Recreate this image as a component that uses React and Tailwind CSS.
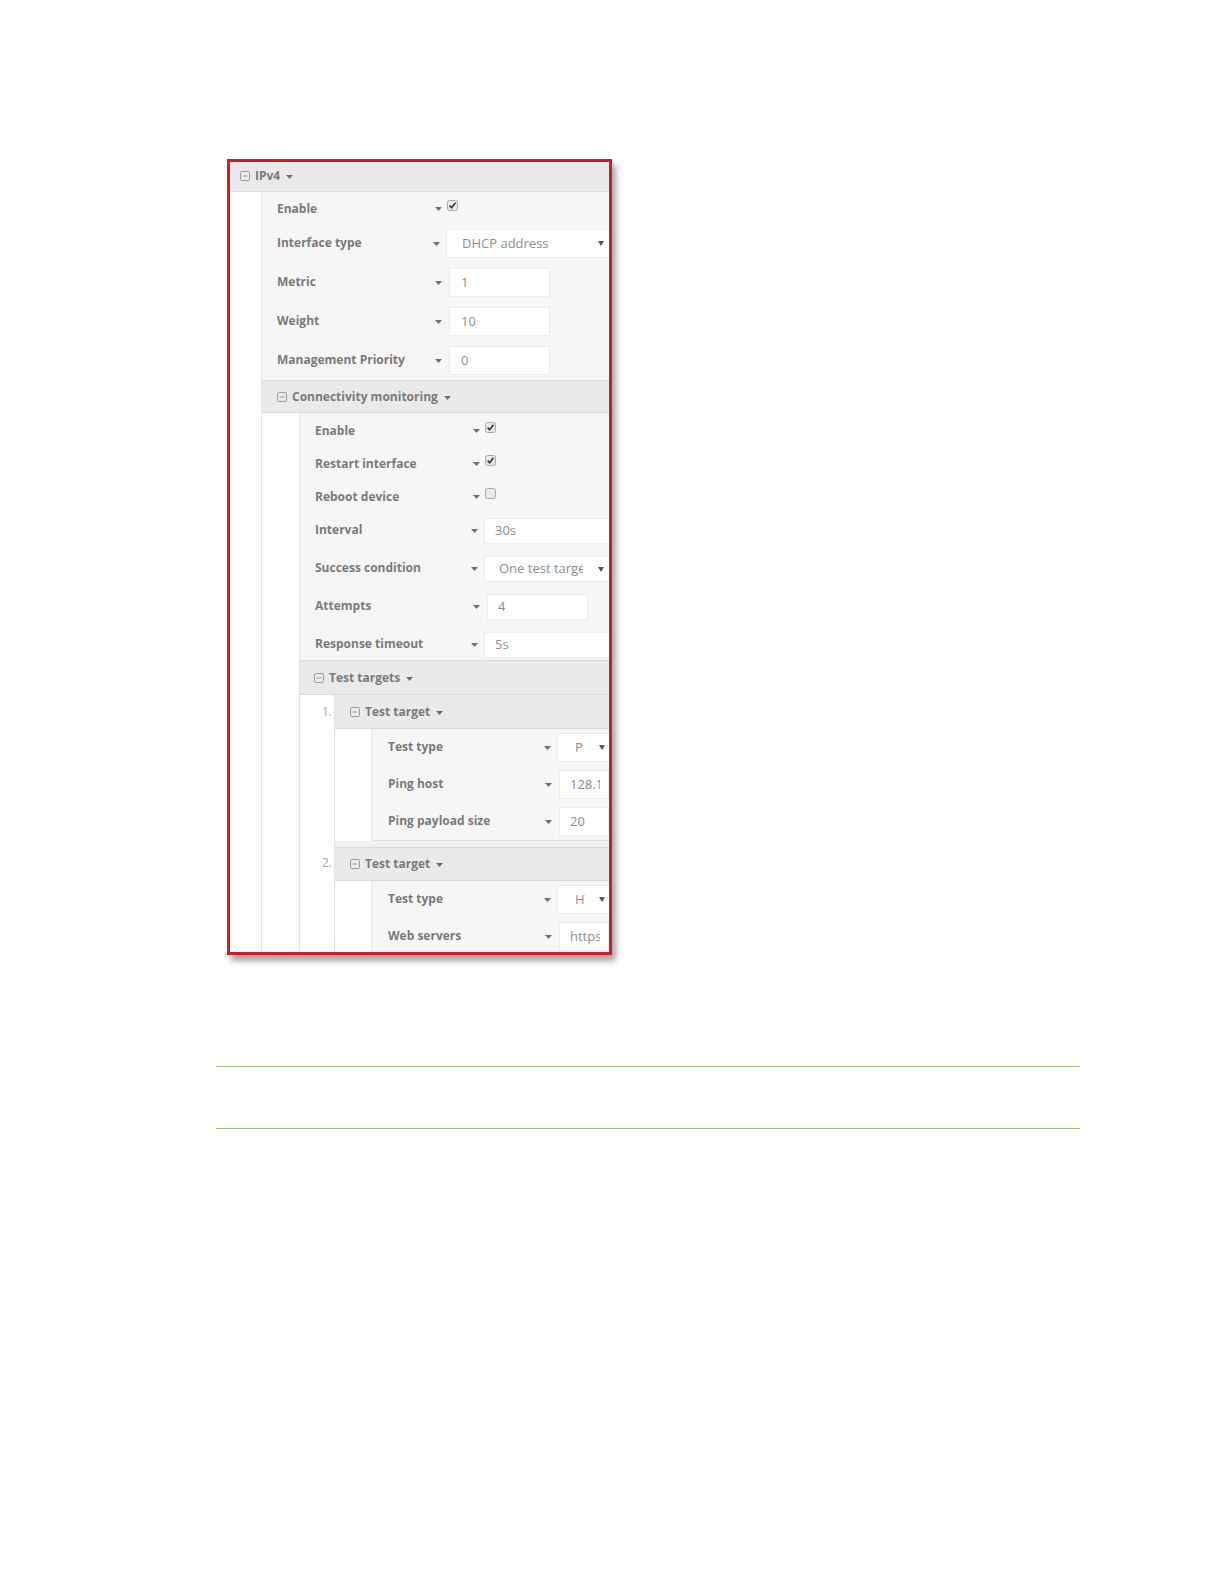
const Caret = ({ className = '' }) => (
  <svg width="7" height="4" viewBox="0 0 7 4" className={className}>
    <path d="M0 0h7L3.5 4z" fill="#707070" />
  </svg>
)

const MinusBox = () => (
  <svg width="10" height="10" viewBox="0 0 10 10" className="shrink-0">
    <rect x="0.5" y="0.5" width="9" height="9" rx="1.5" fill="none" stroke="#9c9c9c" />
    <line x1="2.5" y1="5" x2="7.5" y2="5" stroke="#9c9c9c" />
  </svg>
)

const Check = ({ checked }) => (
  <svg width="11" height="11" viewBox="0 0 11 11" className="shrink-0">
    <rect x="0.5" y="0.5" width="10" height="10" rx="2" fill="#e9e9e9" stroke="#a8a8a8" />
    {checked && <path d="M2.6 5.6l2 2.1 3.9-5" fill="none" stroke="#3a3a3a" strokeWidth="1.7" />}
  </svg>
)

function Header({ title, className }) {
  return (
    <div className={'flex items-center bg-[#eaeaea] border-[#dadada] text-[12px] font-bold text-[#7a7a7a] ' + className}>
      <MinusBox />
      <span className="ml-[5px] leading-[16px]">{title}</span>
      <Caret className="ml-[6px] mt-[2px]" />
    </div>
  )
}

function Label({ children, className = '' }) {
  return <div className={'w-[156px] shrink-0 text-[12px] font-bold text-[#7a7a7a] leading-[16px] whitespace-nowrap ' + className}>{children}</div>
}

function CheckRow({ label, checked, pad }) {
  return (
    <div className={'flex items-start h-[33px] ' + pad}>
      <Label className="pt-[10px]">{label}</Label>
      <div className="w-[10px] flex justify-center mt-[16px]"><Caret /></div>
      <div className="ml-[4px] mt-[9px]"><Check checked={checked} /></div>
    </div>
  )
}

function FieldRow({ label, pad, box, children }) {
  return (
    <div className={pad}>
      <div className={'flex items-center ' + box}>
        <Label className="pb-[2px]">{label}</Label>
        <div className="w-[10px] flex justify-center"><Caret /></div>
        <div className="ml-[6px] h-full">{children}</div>
      </div>
    </div>
  )
}

function Input({ value, className }) {
  return (
    <div className={'h-full bg-white border border-[#ececec] flex items-center overflow-hidden whitespace-nowrap text-[13px] text-[#8d8d8d] ' + className}>
      <span className="overflow-hidden">{value}</span>
    </div>
  )
}

function Select({ value, className, textClass = 'flex-1', gap = 'ml-[10px]' }) {
  return (
    <div className={'h-full bg-white border border-[#ececec] flex items-center whitespace-nowrap text-[13px] text-[#8d8d8d] ' + className}>
      <span className={'min-w-0 overflow-hidden ' + textClass}>{value}</span>
      <svg width="6" height="5" viewBox="0 0 6 5" className={'shrink-0 ' + gap}><path d="M0 0h6L3 5z" fill="#555" /></svg>
    </div>
  )
}

export default function App() {
  return (
    <div className="min-h-[1584px] bg-white font-['Open_Sans',sans-serif] pt-[159px]">
      <div className="ml-[227px] w-[385px] h-[796px] border-[3px] border-[#c4222a] overflow-hidden bg-white shadow-[4px_6px_6px_rgba(0,0,0,0.35)]">
        <Header title="IPv4" className="h-[30px] pl-[10px] pb-[2px] border-b" />
        <div className="flex">
          <div className="w-[32px] shrink-0 bg-white border-r border-[#e4e4e4]" />
          <div className="flex-1 min-w-0 bg-[#f6f6f6]">
            <div className="flex items-start h-[32px] pl-[15px]">
              <Label className="pt-[9px]">Enable</Label>
              <div className="w-[10px] flex justify-center mt-[15px]"><Caret /></div>
              <div className="ml-[4px] mt-[8px]"><Check checked /></div>
            </div>
            <FieldRow label="Interface type" pad="py-[5px] pl-[15px]" box="h-[29px]">
              <Select value="DHCP address" className="w-[165px] pl-[15px] pr-[6px]" />
            </FieldRow>
            <FieldRow label="Metric" pad="py-[5px] pl-[15px]" box="h-[29px]">
              <Input value="1" className="w-[101px] pl-[11px]" />
            </FieldRow>
            <FieldRow label="Weight" pad="py-[5px] pl-[15px]" box="h-[29px]">
              <Input value="10" className="w-[101px] pl-[11px]" />
            </FieldRow>
            <FieldRow label="Management Priority" pad="py-[5px] pl-[15px]" box="h-[29px]">
              <Input value="0" className="w-[101px] pl-[11px]" />
            </FieldRow>

            <Header title="Connectivity monitoring" className="h-[33px] pl-[15px] border-y" />
            <div className="flex">
              <div className="w-[38px] shrink-0 bg-white border-r border-[#e4e4e4]" />
              <div className="flex-1 min-w-0 bg-[#f6f6f6]">
                <CheckRow label="Enable" checked pad="pl-[15px]" />
                <CheckRow label="Restart interface" checked pad="pl-[15px]" />
                <CheckRow label="Reboot device" pad="pl-[15px]" />
                <FieldRow label="Interval" pad="py-[6px] pl-[15px]" box="h-[26px]">
                  <Input value="30s" className="w-[130px] pl-[10px]" />
                </FieldRow>
                <FieldRow label="Success condition" pad="py-[6px] pl-[15px]" box="h-[26px]">
                  <Select value="One test target" className="w-[127px] pl-[14px] pr-[6px]" textClass="w-[84px] shrink-0" gap="ml-[15px]" />
                </FieldRow>
                <FieldRow label="Attempts" pad="py-[6px] pl-[15px]" box="h-[26px]">
                  <Input value="4" className="w-[101px] pl-[10px]" />
                </FieldRow>
                <FieldRow label="Response timeout" pad="pt-[6px] pb-[2px] pl-[15px]" box="h-[26px]">
                  <Input value="5s" className="w-[130px] pl-[10px]" />
                </FieldRow>

                <Header title="Test targets" className="h-[35px] pl-[14px] border-y" />
                <div className="flex">
                  <div className="w-[35px] shrink-0 bg-white border-r border-[#e4e4e4] text-[12px] text-[#a5a5a5]">
                    <div className="h-[34px] flex items-center justify-end pr-[2px]">1.</div>
                    <div className="h-[111px]" />
                    <div className="mt-[6px] h-[34px] flex items-center justify-end pr-[2px]">2.</div>
                  </div>
                  <div className="flex-1 min-w-0 bg-[#f1f1f1]">
                    <Header title="Test target" className="h-[34px] pl-[15px] border-b" />
                    <div className="flex">
                      <div className="w-[37px] shrink-0 bg-white border-r border-[#e4e4e4]" />
                      <div className="flex-1 min-w-0 bg-[#f6f6f6] border-b border-[#e4e4e4]">
                        <FieldRow label="Test type" pad="py-[4px] pl-[16px]" box="h-[29px]">
                          <Select value="Ping" className="w-[53px] pl-[17px] pr-[4px]" textClass="w-[8px] shrink-0" gap="ml-[16px]" />
                        </FieldRow>
                        <FieldRow label="Ping host" pad="py-[4px] pl-[16px]" box="h-[29px]">
                          <Input value="128.1.1.1" className="w-[50px] pl-[10px] pr-[8px]" />
                        </FieldRow>
                        <FieldRow label="Ping payload size" pad="py-[4px] pl-[16px]" box="h-[29px]">
                          <Input value="20" className="w-[50px] pl-[10px] pr-[8px]" />
                        </FieldRow>
                      </div>
                    </div>
                    <div className="mt-[6px]">
                      <Header title="Test target" className="h-[34px] pl-[15px] border-y" />
                      <div className="flex">
                        <div className="w-[37px] shrink-0 bg-white border-r border-[#e4e4e4]" />
                        <div className="flex-1 min-w-0 bg-[#f6f6f6]">
                          <FieldRow label="Test type" pad="py-[4px] pl-[16px]" box="h-[29px]">
                            <Select value="HTTP" className="w-[53px] pl-[17px] pr-[4px]" textClass="w-[9.5px] shrink-0" gap="ml-[14.5px]" />
                          </FieldRow>
                          <FieldRow label="Web servers" pad="py-[4px] pl-[16px]" box="h-[29px]">
                            <Input value="https://example.com" className="w-[50px] pl-[10px] pr-[8px]" />
                          </FieldRow>
                        </div>
                      </div>
                    </div>
                  </div>
                </div>
              </div>
            </div>
          </div>
        </div>
      </div>

      <div className="mt-[111px] ml-[216px] w-[864px] h-px bg-[#93c47d]" />
      <div className="mt-[61px] ml-[216px] w-[864px] h-px bg-[#93c47d]" />
    </div>
  )
}
